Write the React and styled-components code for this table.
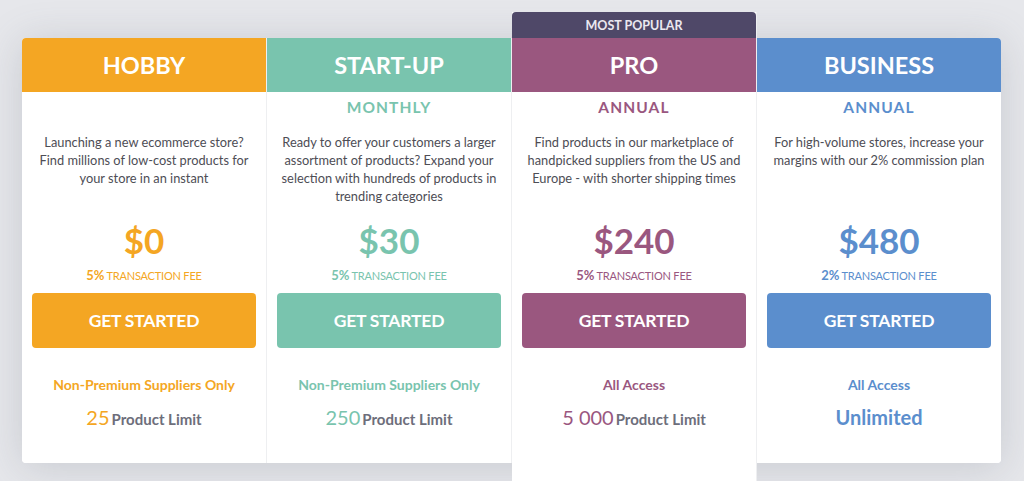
import React from 'react';
import styled, { createGlobalStyle } from 'styled-components';

const GlobalStyle = createGlobalStyle`
  html, body {
    margin: 0;
    padding: 0;
    background: #e6e7eb;
    font-family: Lato, "Open Sans", sans-serif;
    overflow: hidden;
  }
`;

const plans = [
  {
    name: 'HOBBY',
    color: '#f4a623',
    period: '',
    text: 'Launching a new ecommerce store? Find millions of low-cost products for your store in an instant',
    price: '$0',
    fee: '5%',
    access: 'Non-Premium Suppliers Only',
    limit: '25',
  },
  {
    name: 'START-UP',
    color: '#79c4ae',
    period: 'MONTHLY',
    text: 'Ready to offer your customers a larger assortment of products? Expand your selection with hundreds of products in trending categories',
    price: '$30',
    fee: '5%',
    access: 'Non-Premium Suppliers Only',
    limit: '250',
  },
  {
    name: 'PRO',
    color: '#9a577f',
    period: 'ANNUAL',
    text: 'Find products in our marketplace of handpicked suppliers from the US and Europe - with shorter shipping times',
    price: '$240',
    fee: '5%',
    access: 'All Access',
    limit: '5 000',
    featured: true,
  },
  {
    name: 'BUSINESS',
    color: '#5b8ecd',
    period: 'ANNUAL',
    text: 'For high-volume stores, increase your margins with our 2% commission plan',
    price: '$480',
    fee: '2%',
    access: 'All Access',
    unlimited: true,
  },
];

const Page = styled.div`
  padding: 38px 23px 0 22px;
  height: 481px;
  box-sizing: border-box;
`;

const Plans = styled.div`
  display: flex;
  height: 425px;
  background: #fff;
  border-radius: 4px;
  box-shadow: 0 4px 40px rgba(90, 100, 115, 0.22);
`;

const Column = styled.div`
  flex: 1;
  display: flex;
  flex-direction: column;
  background: #fff;
  margin: ${(p) => (p.featured ? '-26px 0 -18px' : '0')};
  border-right: ${(p) => (p.last ? 'none' : '1px solid #eeeff1')};
  border-radius: ${(p) => (p.first ? '4px 0 0 4px' : p.last ? '0 4px 4px 0' : '0')};
  overflow: hidden;
`;

const Badge = styled.div`
  height: 26px;
  background: #4f4868;
  border-radius: 4px 4px 0 0;
  color: #ebe8f0;
  font-size: 12.5px;
  font-weight: 700;
  display: flex;
  align-items: center;
  justify-content: center;
`;

const Header = styled.div`
  height: 54px;
  background: ${(p) => p.color};
  color: #fff;
  font-size: 23.5px;
  font-weight: 700;
  display: flex;
  align-items: center;
  justify-content: center;
`;

const Body = styled.div`
  display: flex;
  flex-direction: column;
  align-items: center;
  padding: 5px 10px 0;
  text-align: center;
`;

const Period = styled.div`
  height: 20px;
  line-height: 20px;
  font-size: 15.5px;
  font-weight: 700;
  letter-spacing: 1.1px;
  color: ${(p) => p.color};
`;

const Description = styled.p`
  margin: 16px 0 0;
  height: 72px;
  padding: 0 1px;
  font-size: 12.8px;
  line-height: 18px;
  color: #4d4d55;
`;

const Price = styled.div`
  margin-top: 15px;
  height: 40px;
  line-height: 40px;
  font-size: 35px;
  font-weight: 700;
  color: ${(p) => p.color};
`;

const Fee = styled.div`
  margin-top: 7px;
  height: 16px;
  line-height: 16px;
  color: ${(p) => p.color};
  font-size: 11px;
  letter-spacing: -0.2px;

  strong {
    font-size: 13px;
    font-weight: 700;
    letter-spacing: 0;
    margin-right: 2px;
  }
`;

const Button = styled.button`
  margin-top: 10px;
  width: 100%;
  height: 55px;
  border: none;
  border-radius: 4px;
  background: ${(p) => p.color};
  color: #fff;
  font-family: inherit;
  font-size: 17.5px;
  font-weight: 700;
  letter-spacing: -0.2px;
  cursor: pointer;
`;

const Access = styled.div`
  margin-top: 28px;
  height: 18px;
  line-height: 18px;
  font-size: 14px;
  font-weight: 700;
  color: ${(p) => p.color};
`;

const Limit = styled.div`
  margin-top: 11px;
  height: 24px;
  line-height: 24px;
  display: flex;
  align-items: baseline;
  gap: 2px;
  font-size: 15px;
  font-weight: 700;
  color: #6d6e7b;
`;

const Count = styled.span`
  font-size: 20px;
  font-weight: 400;
  color: ${(p) => p.color};
`;

const Unlimited = styled.span`
  font-size: 20px;
  font-weight: 700;
  color: ${(p) => p.color};
`;

const Plan = ({ plan, first, last }) => (
  <Column featured={plan.featured} first={first} last={last}>
    {plan.featured && <Badge>MOST POPULAR</Badge>}
    <Header color={plan.color}>{plan.name}</Header>
    <Body>
      <Period color={plan.color}>{plan.period}</Period>
      <Description>{plan.text}</Description>
      <Price color={plan.color}>{plan.price}</Price>
      <Fee color={plan.color}>
        <strong>{plan.fee}</strong>
        TRANSACTION FEE
      </Fee>
      <Button color={plan.color}>GET STARTED</Button>
      <Access color={plan.color}>{plan.access}</Access>
      <Limit>
        {plan.unlimited ? (
          <Unlimited color={plan.color}>Unlimited</Unlimited>
        ) : (
          <>
            <Count color={plan.color}>{plan.limit}</Count>
            Product Limit
          </>
        )}
      </Limit>
    </Body>
  </Column>
);

export default function App() {
  return (
    <Page>
      <GlobalStyle />
      <Plans>
        {plans.map((plan, i) => (
          <Plan key={plan.name} plan={plan} first={i === 0} last={i === plans.length - 1} />
        ))}
      </Plans>
    </Page>
  );
}
